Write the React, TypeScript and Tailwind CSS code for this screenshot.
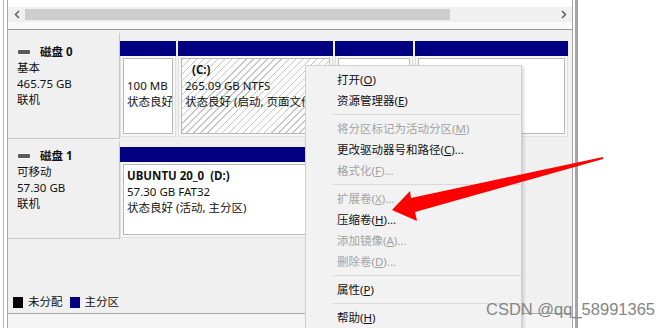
import React from 'react';

type Item = { t: string; k: string; s?: string; d?: boolean } | 'sep';

const items: Item[] = [
  { t: '打开', k: 'O' },
  { t: '资源管理器', k: 'E' },
  'sep',
  { t: '将分区标记为活动分区', k: 'M', d: true },
  { t: '更改驱动器号和路径', k: 'C', s: '...' },
  { t: '格式化', k: 'F', s: '...', d: true },
  'sep',
  { t: '扩展卷', k: 'X', s: '...', d: true },
  { t: '压缩卷', k: 'H', s: '...' },
  { t: '添加镜像', k: 'A', s: '...', d: true },
  { t: '删除卷', k: 'D', s: '...', d: true },
  'sep',
  { t: '属性', k: 'P' },
  'sep',
  { t: '帮助', k: 'H' },
];

function Menu() {
  return (
    <div className="absolute left-[305px] top-[65px] w-[217px] bg-[#f2f2f2] border border-[#cfcfcf] shadow-[2px_2px_3px_rgba(0,0,0,0.15)] py-[3px] text-[11.5px]">
      {items.map((it, i) =>
        it === 'sep' ? (
          <div key={i} className="h-[7px] flex items-center pl-[27px]">
            <div className="h-px w-full bg-[#d9d9d9]" />
          </div>
        ) : (
          <div
            key={i}
            className={`h-[21px] flex items-center pl-[31px] ${it.d ? 'text-[#a3a3a3]' : 'text-[#111111]'}`}
          >
            {it.t}(<span className="underline">{it.k}</span>){it.s}
          </div>
        )
      )}
    </div>
  );
}

function Part({
  w,
  hatch,
  children,
}: {
  w: string;
  hatch?: boolean;
  children?: React.ReactNode;
}) {
  return (
    <div className={`${w} flex flex-col shrink-0`}>
      <div className="h-[15px] bg-[#000080] shrink-0" />
      <div className="flex-1 bg-[#f6f6f6] p-[2px] border-x border-b border-[#e0e0e0]">
        <div
          className={`h-full border border-[#b9b9b9] ${
            hatch
              ? 'bg-[repeating-linear-gradient(135deg,#c6c6c6_0px,#c6c6c6_1px,#ffffff_1px,#ffffff_5px)]'
              : 'bg-white'
          } px-[3px] pt-[3px] leading-[16px] overflow-hidden whitespace-nowrap text-[#111111]`}
        >
          {children}
        </div>
      </div>
    </div>
  );
}

function DiskLabel({ name, lines, pt }: { name: string; lines: string[]; pt: string }) {
  return (
    <div className={`w-[112px] shrink-0 border-r border-b border-[#c9c9c9] bg-[#f0f0f0] pl-[9px] ${pt} leading-[16px] text-[#111111]`}>
      <div className="flex items-center">
        <div className="w-[12px] h-[4px] rounded-[1px] bg-[#5a5a5a] ml-[1px]" />
        <span className="ml-[10px] font-bold">{name}</span>
      </div>
      {lines.map((l, i) => (
        <div key={i}>{l}</div>
      ))}
    </div>
  );
}

export default function App() {
  return (
    <div className="relative w-[671px] h-[328px] overflow-hidden bg-white font-['Noto_Sans','Noto_Sans_CJK_SC',sans-serif] text-[11.5px]">
      <div className="flex h-full">
        <div className="w-[3px] shrink-0" />
        <div className="w-[4px] shrink-0 border-l border-[#b4b4b4]" />
        <div className="w-[566px] shrink-0 border-x border-[#a8a8a8] flex flex-col">
          <div className="h-[7px] bg-white shrink-0" />
          {/* scrollbar */}
          <div className="h-[15px] shrink-0 flex bg-[#f0f0f0]">
            <div className="w-[17px] flex items-center justify-center">
              <svg width="6" height="9" viewBox="0 0 6 9">
                <path d="M5 1 L1.5 4.5 L5 8" fill="none" stroke="#606060" strokeWidth="1.5" />
              </svg>
            </div>
            <div className="flex-1 py-[2px]">
              <div className="w-[425px] h-full bg-[#cdcdcd]" />
            </div>
            <div className="w-[17px] flex items-center justify-center">
              <svg width="6" height="9" viewBox="0 0 6 9">
                <path d="M1 1 L4.5 4.5 L1 8" fill="none" stroke="#606060" strokeWidth="1.5" />
              </svg>
            </div>
          </div>
          <div className="h-[8px] shrink-0 bg-[#fafafa] border-b border-[#9a9a9a]" />
          {/* disk area */}
          <div className="h-[284px] shrink-0 flex flex-col bg-[#f0f0f0] border-b border-[#a9a9a9] pt-[3px]">
            {/* disk 0 */}
            <div className="h-[106px] flex shrink-0">
              <DiskLabel name="磁盘 0" lines={['基本', '465.75 GB', '联机']} pt="pt-[11px]" />
              <div className="flex gap-[2px] pt-[8px] pb-[2px]">
                <Part w="w-[56px]">
                  <div>&nbsp;</div>
                  <div>100 MB</div>
                  <div>状态良好</div>
                </Part>
                <Part w="w-[155px]" hatch>
                  <div className="ml-[7px] font-bold">(C:)</div>
                  <div>265.09 GB NTFS</div>
                  <div>状态良好 (启动, 页面文件, 故障转储, 主分区)</div>
                </Part>
                <Part w="w-[78px]" />
                <Part w="w-[153px]" />
              </div>
            </div>
            {/* disk 1 */}
            <div className="h-[98px] mt-[2px] flex shrink-0">
              <DiskLabel name="磁盘 1" lines={['可移动', '57.30 GB', '联机']} pt="pt-[7px]" />
              <div className="flex gap-[2px] pt-[6px] pb-[1px]">
                <Part w="w-[360px]">
                  <div className="font-bold whitespace-pre">UBUNTU 20_0  (D:)</div>
                  <div>57.30 GB FAT32</div>
                  <div>状态良好 (活动, 主分区)</div>
                </Part>
              </div>
            </div>
            <div className="flex-1" />
            {/* legend */}
            <div className="h-[22px] shrink-0 flex items-center pl-[5px] text-[#111111]">
              <div className="w-[10px] h-[11px] bg-black" />
              <span className="ml-[5px]">未分配</span>
              <div className="ml-[7px] w-[10px] h-[11px] bg-[#000080]" />
              <span className="ml-[5px]">主分区</span>
            </div>
          </div>
          <div className="flex-1 bg-[#f5f5f5]" />
        </div>
        <div className="w-[2px] shrink-0" />
        <div className="w-[3px] shrink-0 bg-[#a5a5a5]" />
        <div className="flex-1" />
      </div>

      <Menu />

      <svg
        className="absolute left-0 top-0 pointer-events-none"
        width="671"
        height="328"
        viewBox="0 0 671 328"
      >
        <polygon
          points="392,210 410,191 411,198 603,157 603,159 415,212 417,221"
          fill="#ff0000"
        />
      </svg>

      <div className="absolute left-[486px] top-[301px] leading-none text-[16.5px] text-[#858585] font-['Liberation_Sans',sans-serif] whitespace-nowrap">
        CSDN @qq_58991365
      </div>
    </div>
  );
}
